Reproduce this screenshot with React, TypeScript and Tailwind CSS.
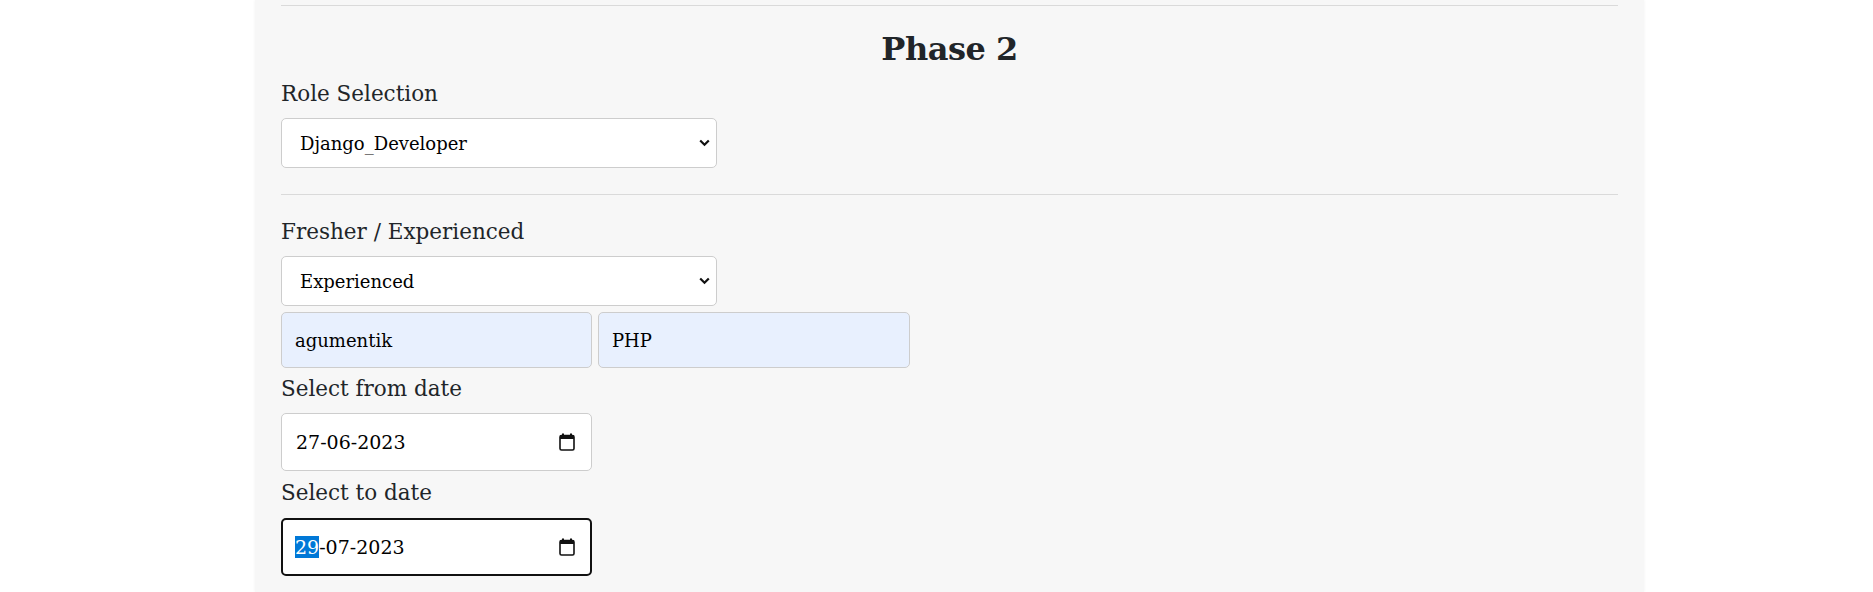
import React from "react";

const serif = "font-['DejaVu_Serif','Liberation_Serif',serif]";

function Chevron() {
  return (
    <svg width="11" height="8" viewBox="0 0 11 8" className="shrink-0">
      <path d="M1.2 1.5 L5.5 5.8 L9.8 1.5" fill="none" stroke="#111" strokeWidth="2.2" />
    </svg>
  );
}

function CalendarIcon() {
  return (
    <svg width="16" height="18" viewBox="0 0 16 18" className="shrink-0">
      <rect x="3" y="0.5" width="2" height="3" fill="#111" />
      <rect x="11" y="0.5" width="2" height="3" fill="#111" />
      <rect x="1" y="2.5" width="14" height="14.5" rx="1.5" fill="none" stroke="#111" strokeWidth="1.6" />
      <rect x="1" y="2.5" width="14" height="3.5" fill="#111" />
    </svg>
  );
}

function SelectBox({ value }: { value: string }) {
  return (
    <div className="flex h-[50px] w-[436px] items-center justify-between rounded-[5px] border border-[#cdcdcd] bg-white pl-[18px] pr-[6px]">
      <span className="text-[18px] text-black">{value}</span>
      <Chevron />
    </div>
  );
}

function Label({ children, className = "" }: { children: React.ReactNode; className?: string }) {
  return <div className={`h-[28px] text-[21.5px] leading-[28px] text-[#212529] ${className}`}>{children}</div>;
}

export default function App() {
  return (
    <div className={`min-h-[592px] w-full bg-white ${serif}`}>
      <div className="ml-[255px] min-h-[592px] w-[1389px] bg-[#f7f7f7] px-[26px] pb-4 shadow-[0_0_3px_rgba(0,0,0,0.06)]">
        <div className="h-[5px]" />
        <div className="h-px bg-[#dadada]" />
        <h2 className="mt-[23px] h-[40px] text-center text-[32px] font-bold leading-[40px] tracking-[-0.5px] text-[#212529]">
          Phase 2
        </h2>
        <Label className="mt-[11px]">Role Selection</Label>
        <div className="mt-[10px]">
          <SelectBox value="Django_Developer" />
        </div>
        <div className="mt-[26px] h-px bg-[#dadada]" />
        <Label className="mt-[23px]">Fresher / Experienced</Label>
        <div className="mt-[10px]">
          <SelectBox value="Experienced" />
        </div>
        <div className="mt-[6px] flex gap-[6px]">
          <div className="flex h-[56px] w-[311px] items-center rounded-[5px] border border-[#cdcdcd] bg-[#e8f0fe] pl-[13px] text-[18px] text-black">
            agumentik
          </div>
          <div className="flex h-[56px] w-[312px] items-center rounded-[5px] border border-[#cdcdcd] bg-[#e8f0fe] pl-[13px] text-[18px] text-black">
            PHP
          </div>
        </div>
        <Label className="mt-[7px]">Select from date</Label>
        <div className="mt-[10px] flex h-[58px] w-[311px] items-center justify-between rounded-[5px] border border-[#cdcdcd] bg-white pl-[14px] pr-[16px] text-[19px] text-black">
          <span>27-06-2023</span>
          <CalendarIcon />
        </div>
        <Label className="mt-[8px]">Select to date</Label>
        <div className="mt-[11px] flex h-[58px] w-[311px] items-center justify-between rounded-[5px] border-2 border-[#111] bg-white pl-[12px] pr-[15px] text-[19px] text-black">
          <span>
            <span className="bg-[#0078d7] text-white">29</span>-07-2023
          </span>
          <CalendarIcon />
        </div>
      </div>
    </div>
  );
}
